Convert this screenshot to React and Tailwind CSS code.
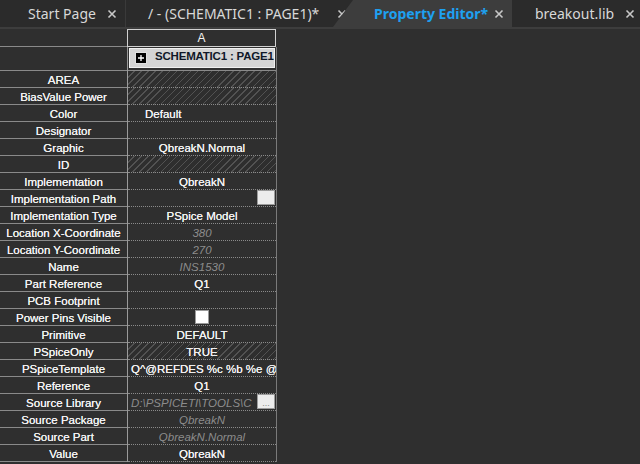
import React from 'react';

const rows = [
  { name: 'AREA', hatch: true },
  { name: 'BiasValue Power', hatch: true },
  { name: 'Color', value: 'Default', align: 'left' },
  { name: 'Designator' },
  { name: 'Graphic', value: 'QbreakN.Normal' },
  { name: 'ID', hatch: true },
  { name: 'Implementation', value: 'QbreakN' },
  { name: 'Implementation Path', button: true },
  { name: 'Implementation Type', value: 'PSpice Model' },
  { name: 'Location X-Coordinate', value: '380', dim: true },
  { name: 'Location Y-Coordinate', value: '270', dim: true },
  { name: 'Name', value: 'INS1530', dim: true },
  { name: 'Part Reference', value: 'Q1' },
  { name: 'PCB Footprint' },
  { name: 'Power Pins Visible', check: true },
  { name: 'Primitive', value: 'DEFAULT' },
  { name: 'PSpiceOnly', value: 'TRUE', hatch: true },
  { name: 'PSpiceTemplate', value: 'Q^@REFDES %c %b %e @', align: 'left' },
  { name: 'Reference', value: 'Q1' },
  { name: 'Source Library', value: 'D:\\PSPICETI\\TOOLS\\C', dim: true, align: 'left', dots: true },
  { name: 'Source Package', value: 'QbreakN', dim: true },
  { name: 'Source Part', value: 'QbreakN.Normal', dim: true },
  { name: 'Value', value: 'QbreakN' },
];

const CloseX = () => (
  <svg width="10" height="10" viewBox="0 0 10 10" className="shrink-0">
    <path d="M1.5 1.5 L8.5 8.5 M8.5 1.5 L1.5 8.5" stroke="#c8c8c8" strokeWidth="1.6" />
  </svg>
);

const Row = ({ row }) => {
  const valueCls = row.dim ? 'italic text-[#8c8c8c]' : 'text-[#f2f2f2] [text-shadow:0_0_0.3px_#ffffff]';
  return (
    <div className="flex h-[17px]">
      <div className="w-[127px] shrink-0 flex items-center justify-center pt-[3px] border-b border-[#8a8a8a] text-[11.5px] text-[#f2f2f2] whitespace-nowrap overflow-hidden [text-shadow:0_0_0.3px_#ffffff]">
        {row.name}
      </div>
      <div className="w-px bg-[#9a9a9a]" />
      <div
        className={`w-[148px] shrink-0 relative flex items-center pt-[3px] overflow-hidden border-b border-dotted border-[#8a8a8a] text-[11.5px] whitespace-nowrap ${
          row.align === 'left' ? 'justify-start pl-[3px]' : 'justify-center'
        } ${row.hatch ? 'bg-[repeating-linear-gradient(135deg,#2e2e2e_0px,#2e2e2e_4px,#525252_4px,#525252_5px)]' : ''}`}
      >
        {row.value && (
          <span className={`${valueCls} ${row.name === 'Color' ? 'pl-[14px]' : ''}`}>{row.value}</span>
        )}
        {row.button && (
          <div className="absolute right-[1px] top-[0px] w-[18px] h-[15px] bg-[#ececec] border border-[#9c9c9c]" />
        )}
        {row.dots && (
          <div className="absolute right-[1px] top-[0px] w-[18px] h-[15px] bg-[#ececec] border border-[#9c9c9c] flex items-end justify-center text-[9px] leading-[9px] text-[#888]">
            ...
          </div>
        )}
        {row.check && <div className="w-[14px] h-[14px] -mt-[3px] bg-white border border-[#9a9a9a]" />}
      </div>
      <div className="w-px bg-[#7a7a7a]" />
    </div>
  );
};

export default function App() {
  return (
    <div className="w-[640px] h-[464px] overflow-hidden bg-[#2f2f2f] font-['Liberation_Sans',Arial,sans-serif]">
      {/* tab strip */}
      <div className="flex h-[27px] bg-[#2b2b2b] font-['Noto_Sans','Open_Sans',sans-serif] text-[14px]">
        <div className="w-[126px] shrink-0 flex items-center justify-between pl-[28px] pr-[8px] text-[#d8d8d8] border-r border-[#3a3a3a]">
          <span className="whitespace-nowrap">Start Page</span>
          <CloseX />
        </div>
        <div className="w-[221px] shrink-0 flex items-center justify-between pl-[22px] pr-[0px] text-[#d8d8d8]">
          <span className="whitespace-nowrap">/ - (SCHEMATIC1 : PAGE1)*</span>
          <CloseX />
        </div>
        <div className="w-[179px] -ml-[14px] shrink-0 flex items-center justify-between pl-[41px] pr-[8px] bg-[#3d3d3d] text-[#1ea0f0] font-bold [clip-path:polygon(20px_0,100%_0,100%_100%,0_100%)]">
          <span className="whitespace-nowrap">Property Editor*</span>
          <CloseX />
        </div>
        <div className="flex-1 flex items-center justify-between pl-[23px] pr-[5px] text-[#d8d8d8]">
          <span className="whitespace-nowrap">breakout.lib</span>
          <CloseX />
        </div>
      </div>
      <div className="h-[2px] bg-[#3d3d3d]" />

      {/* grid */}
      <div className="flex flex-col w-[277px]">
        <div className="flex h-[18px]">
          <div className="w-[127px] shrink-0 border-b border-[#8a8a8a]" />
          <div className="w-[149px] shrink-0 border border-[#d0d0d0] flex items-center justify-center text-[12px] text-[#f2f2f2]">
            A
          </div>
        </div>
        <div className="flex h-[24px]">
          <div className="w-[127px] shrink-0 border-b border-[#8a8a8a]" />
          <div className="w-px bg-[#9a9a9a]" />
          <div className="w-[148px] shrink-0 p-[1px] pb-[2px] border-b border-[#8a8a8a]">
            <div className="h-full bg-[#d4d4d4] border border-[#f0f0f0] flex items-center gap-[8px] pl-[5px] overflow-hidden">
              <div className="w-[12px] h-[12px] bg-black border border-[#e0e0e0] flex items-center justify-center shrink-0">
                <svg width="8" height="8" viewBox="0 0 8 8">
                  <path d="M1 4 H7 M4 1 V7" stroke="#fff" strokeWidth="1.3" />
                </svg>
              </div>
              <span className="text-[11.5px] font-bold tracking-[-0.2px] text-[#101828] whitespace-nowrap -mt-[3px]">SCHEMATIC1 : PAGE1</span>
            </div>
          </div>
          <div className="w-px bg-[#7a7a7a]" />
        </div>
        {rows.map((r) => (
          <Row key={r.name} row={r} />
        ))}
      </div>
    </div>
  );
}
